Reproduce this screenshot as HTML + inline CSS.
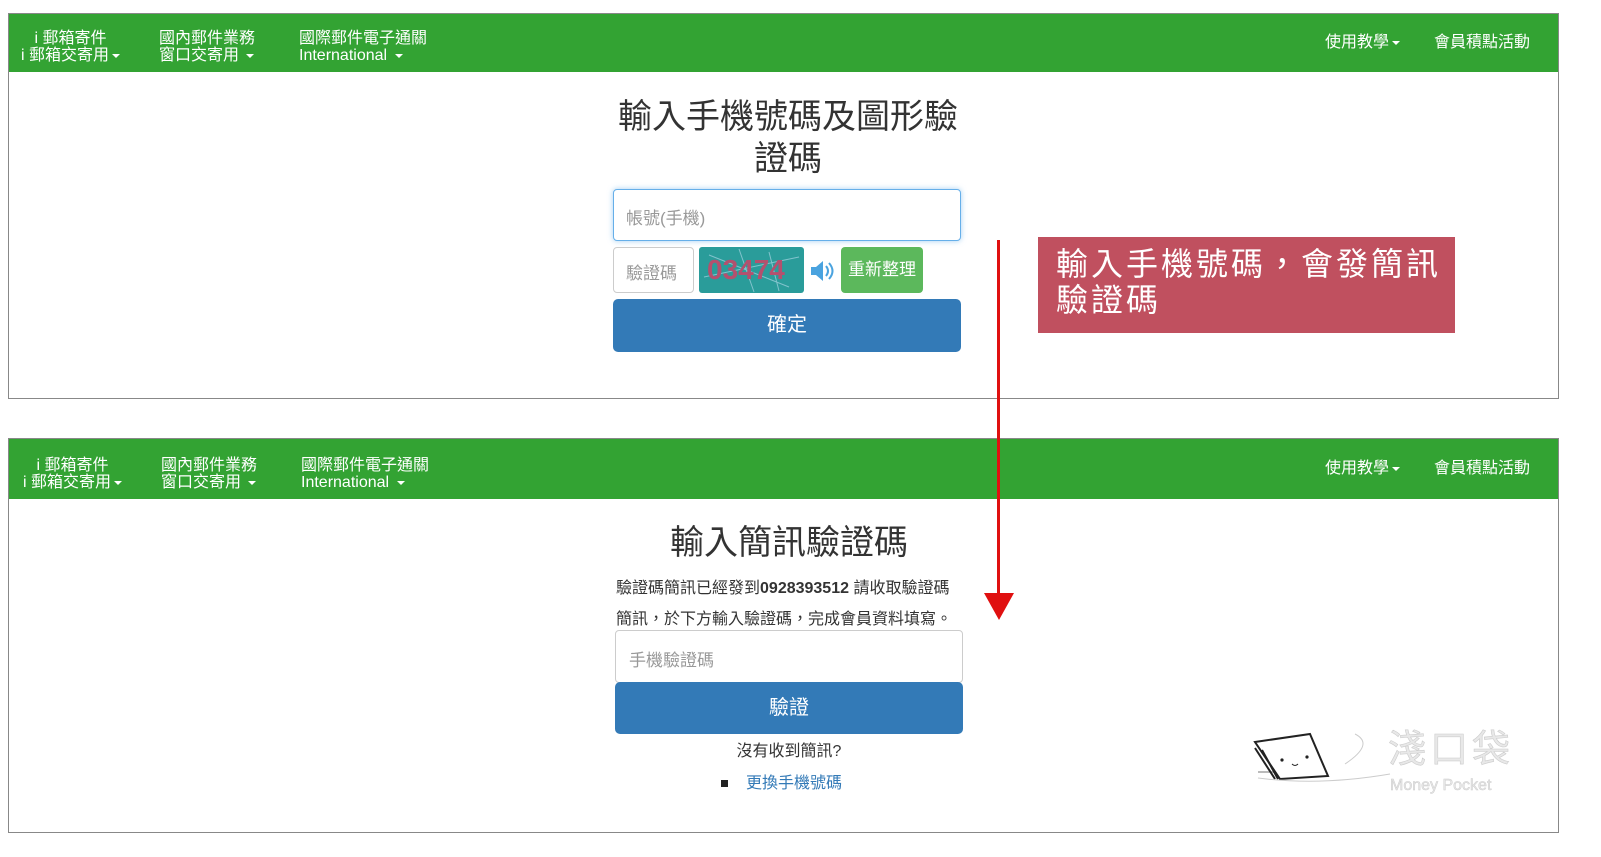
<!DOCTYPE html>
<html><head><meta charset="utf-8"><style>
*{box-sizing:border-box;margin:0;padding:0}
body{width:1601px;height:857px;background:#fff;position:relative;overflow:hidden;font-family:"Liberation Sans","Noto Sans CJK TC",sans-serif;color:#333}
.panel{position:absolute;left:8px;width:1551px;border:1px solid #888;background:#fff}
.nav{height:58px;background:#33a333;color:#fff;font-size:16px;line-height:17px;position:relative}
.nav .it{position:absolute;top:16px}
.car{display:inline-block;border-left:4px solid transparent;border-right:4px solid transparent;border-top:4px solid #fff;vertical-align:middle;margin-left:3px}
.abs{position:absolute}
.inp{position:absolute;border:1px solid #ccc;border-radius:4px;background:#fff;color:#999;font-size:17px}
.btn{position:absolute;border-radius:5px;background:#337ab7;color:#fff;font-size:20px;text-align:center}
</style></head><body>

<div class="panel" style="top:13px;height:386px">
 <div class="nav">
  <div class="it" style="left:12px;text-align:center">i 郵箱寄件<br>i 郵箱交寄用<span class="car"></span></div>
  <div class="it" style="left:150px">國內郵件業務<br>窗口交寄用 <span class="car"></span></div>
  <div class="it" style="left:290px">國際郵件電子通關<br>International <span class="car"></span></div>
  <div class="it" style="left:1316px;top:20px">使用教學<span class="car"></span></div>
  <div class="it" style="left:1425px;top:20px">會員積點活動</div>
 </div>
 <div class="abs" style="left:595px;top:82px;width:368px;text-align:center;font-size:34px;line-height:42px;color:#333">輸入手機號碼及圖形驗<br>證碼</div>
 <div class="inp" style="left:604px;top:175px;width:348px;height:52px;border-color:#66afe9;box-shadow:0 0 6px rgba(102,175,233,.6);padding:14px 12px">帳號(手機)</div>
 <div class="inp" style="left:604px;top:233px;width:81px;height:46px;padding:11px 12px">驗證碼</div>
 <svg class="abs" style="left:690px;top:233px" width="105" height="46"><rect width="105" height="46" rx="3" fill="#2a9c9a"/><path d="M5 30 L100 10 M10 8 L90 40 M40 2 L55 45 M70 5 L80 44" stroke="#bde" stroke-width="1" opacity=".6"/><text x="8" y="32" font-family="Liberation Sans" font-weight="bold" font-size="28" fill="#b4506e">03474</text></svg>
 <svg class="abs" style="left:800px;top:246px" width="28" height="22"><path d="M2 7h5l7-6v20l-7-6H2z" fill="#4aa3df"/><path d="M17 6q4 5 0 10M20 3q7 8 0 16" stroke="#4aa3df" stroke-width="2" fill="none"/></svg>
 <div class="abs" style="left:832px;top:233px;width:82px;height:46px;background:#5cb85c;border-radius:4px;color:#fff;font-size:17px;text-align:center;line-height:46px">重新整理</div>
 <div class="btn" style="left:604px;top:285px;width:348px;height:53px;line-height:53px">確定</div>
</div>

<div class="panel" style="top:438px;height:395px">
 <div class="nav" style="height:60px">
  <div class="it" style="left:14px;top:18px;text-align:center">i 郵箱寄件<br>i 郵箱交寄用<span class="car"></span></div>
  <div class="it" style="left:152px;top:18px">國內郵件業務<br>窗口交寄用 <span class="car"></span></div>
  <div class="it" style="left:292px;top:18px">國際郵件電子通關<br>International <span class="car"></span></div>
  <div class="it" style="left:1316px;top:21px">使用教學<span class="car"></span></div>
  <div class="it" style="left:1425px;top:21px">會員積點活動</div>
 </div>
 <div class="abs" style="left:606px;top:84px;width:348px;text-align:center;font-size:34px;line-height:40px">輸入簡訊驗證碼</div>
 <div class="abs" style="left:607px;top:134px;width:380px;font-size:16px;line-height:31px;color:#333">驗證碼簡訊已經發到<b>0928393512</b> 請收取驗證碼<br>簡訊，於下方輸入驗證碼，完成會員資料填寫。</div>
 <div class="inp" style="left:606px;top:191px;width:348px;height:53px;padding:15px 13px">手機驗證碼</div>
 <div class="btn" style="left:606px;top:243px;width:348px;height:52px;line-height:52px">驗證</div>
 <div class="abs" style="left:606px;top:298px;width:348px;text-align:center;font-size:16px">沒有收到簡訊?</div>
 <div class="abs" style="left:712px;top:330px;font-size:16px;color:#337ab7"><span style="display:inline-block;width:7px;height:7px;background:#222;margin-right:18px;vertical-align:middle"></span>更換手機號碼</div>
</div>

<div class="abs" style="left:997px;top:240px;width:3px;height:355px;background:#e01010"></div>
<div class="abs" style="left:984px;top:593px;border-left:15px solid transparent;border-right:15px solid transparent;border-top:27px solid #e01010"></div>

<div class="abs" style="left:1038px;top:237px;width:417px;height:96px;background:#c0505f;color:#fff;font-size:32px;line-height:36px;padding:9px 18px;letter-spacing:3px;white-space:nowrap">輸入手機號碼，會發簡訊<br>驗證碼</div>

<svg class="abs" style="left:1250px;top:722px" width="270" height="95">
 <path d="M8 50h60" stroke="#bbb" stroke-width="2"/>
 <path d="M5 20 L60 12 L78 54 L30 57 Z" fill="#fff" stroke="#222" stroke-width="2"/>
 <path d="M5 26 L25 57 M12 28 L28 57" stroke="#222" stroke-width="2"/>
 <circle cx="32" cy="38" r="1.6" fill="#222"/><circle cx="57" cy="35" r="1.6" fill="#222"/>
 <path d="M42 42q3 3 6 0" stroke="#222" fill="none"/>
 <path d="M8 56 Q70 64 140 52 M105 12 q20 10 -10 30" stroke="#ccc" fill="none"/>
 <text x="138" y="40" font-size="38" fill="#e8e8e8" stroke="#ccc" stroke-width=".6" font-family="Noto Sans CJK TC" letter-spacing="4">淺口袋</text>
 <text x="140" y="68" font-size="16" fill="#e8e8e8" stroke="#ccc" stroke-width=".5" font-family="Liberation Sans">Money Pocket</text>
</svg>
</body></html>
